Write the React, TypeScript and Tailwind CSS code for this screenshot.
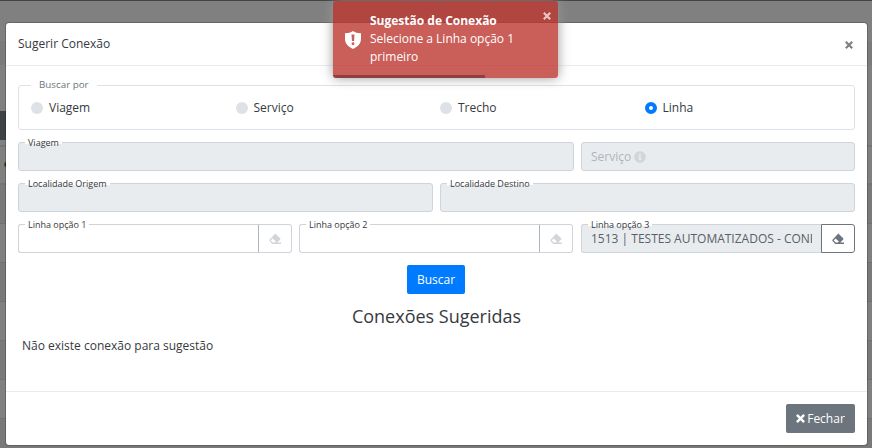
import { useState } from 'react';
import type { ReactNode } from 'react';
import { FaInfoCircle } from 'react-icons/fa';

const OPTIONS = ['Viagem', 'Serviço', 'Trecho', 'Linha'];

// Rows of the listing behind the backdrop
const PAGE_ROWS = [
  { id: 'topbar', style: 'h-px bg-[#444444]' },
  { id: 'title', style: 'h-10 bg-[#808080]' },
  { id: 'filter', style: 'h-6 bg-[#7a7b7c]' },
  { id: 'space', style: 'h-[46px] bg-[#808080]' },
  { id: 'thead', style: 'h-[29px] bg-[linear-gradient(to_right,#3e4247_50%,#808080_50%)]' },
  { id: 'pad', style: 'h-[5px] bg-[#808080]' },
  { id: 'r1', style: 'h-[38px] border-t-2 border-[#737475] bg-[#808080]' },
  { id: 'r2', style: 'h-10 border-t-2 border-[#737475] bg-[#797979]' },
  { id: 'r3', style: 'h-[39px] border-t border-[#6f7071] bg-[#808080]' },
  { id: 'r4', style: 'h-[39px] border-t border-[#6f7071] bg-[#797979]' },
  { id: 'r5', style: 'h-[39px] border-t border-[#6f7071] bg-[#808080]' },
  { id: 'r6', style: 'h-[39px] border-t border-[#6f7071] bg-[#797979]' },
  { id: 'r7', style: 'h-[39px] border-t border-[#6f7071] bg-[#808080]' },
  { id: 'r8', style: 'flex-1 border-t border-[#6f7071] bg-[#797979]' },
];

function CloseIcon({ className = '' }: { className?: string }) {
  return (
    <svg viewBox="0 0 8 8" className={className} fill="none" stroke="currentColor" strokeWidth="2.2">
      <path d="M.8.8l6.400 6.400M7.200.8L.8 7.200" />
    </svg>
  );
}

function EraserIcon() {
  return (
    <svg viewBox="0 0 12 11" className="h-[11px] w-3" fill="currentColor">
      <path
        fillRule="evenodd"
        d="M6.300.4 11.200 5.300Q11.700 5.900 11.200 6.500L8.300 9.600H12V11H3.300L.5 8Q0 7.300.5 6.700ZM3.500 5.500 1.700 7.400 3.800 9.600H5.900L6.900 8.500Z"
      />
    </svg>
  );
}

interface FieldProps {
  label: string;
  value?: string;
  disabled?: boolean;
  action?: ReactNode;
  className?: string;
}

function Field({ label, value = '', disabled, action, className = '' }: FieldProps) {
  return (
    <div className={`relative flex h-[29px] ${className}`}>
      <input
        aria-label={label}
        defaultValue={value}
        disabled={disabled}
        className={`h-full min-w-0 flex-1 border border-[#ced4da] px-[9px] text-[12px] text-[#5a6066] outline-none ${
          disabled ? 'bg-[#e9ecef]' : 'bg-white'
        } ${action ? 'rounded-l-[3px] border-r-0' : 'rounded-[3px]'}`}
      />
      {action}
      <span className="absolute top-[-5px] left-[7px] bg-[linear-gradient(transparent_5px,#fff_5px,#fff_7px,transparent_7px)] px-[3px] text-[9px] leading-[12px]">
        {label}
      </span>
    </div>
  );
}

function ClearButton({ active }: { active?: boolean }) {
  return (
    <button
      aria-label="Limpar"
      className={`flex h-full w-[34px] shrink-0 items-center justify-center rounded-r-[3px] border bg-white ${
        active ? 'border-[#6c757d] text-[#6c757d]' : 'border-[#ced4da] border-l-[#adb5bd] text-[#d3d6d8]'
      }`}
    >
      <EraserIcon />
    </button>
  );
}

function Toast() {
  return (
    <div className="absolute top-px left-[333px] h-[77px] w-[225px] overflow-hidden rounded-[3px] bg-[#bd362f]/80 text-white shadow-[0_0_12px_#999]">
      <div className="flex h-full items-center pl-3">
        <svg viewBox="0 0 18 20" className="h-[18px] w-[16px] shrink-0" fill="currentColor">
          <path
            fillRule="evenodd"
            d="M9 0c2.5 1.7 5.200 2.400 9 2.500v6.200C18 14 14.600 17.800 9 20 3.400 17.800 0 14 0 8.700V2.500C3.800 2.400 6.500 1.700 9 0ZM7.300 3.800l.5 7.400h2.400l.5-7.400ZM9 12.600a1.600 1.600 0 1 0 0 3.200 1.600 1.600 0 0 0 0-3.200Z"
          />
        </svg>
        <div className="mb-[2px] ml-[9px] w-[165px] leading-[18px]">
          <div className="font-bold">Sugestão de Conexão</div>
          <div>Selecione a Linha opção 1 primeiro</div>
        </div>
      </div>
      <button aria-label="Fechar aviso" className="absolute top-[11px] right-[7px] opacity-70">
        <CloseIcon className="size-2" />
      </button>
      <div className="absolute bottom-0 left-0 h-[3px] w-[152px] bg-black/30" />
    </div>
  );
}

export default function App() {
  const [option, setOption] = useState('Linha');

  return (
    <div className="relative h-[448px] w-[872px] overflow-hidden font-['Open_Sans',sans-serif] text-[12px] leading-[18px] text-[#363a3e]">
      <div className="flex h-full flex-col">
        {PAGE_ROWS.map((row) => (
          <div key={row.id} className={row.style} />
        ))}
      </div>
      <span className="absolute top-[161px] left-1 size-[7px] rounded-full border border-[#6b4d18] bg-[#33260f]" />

      {/* Modal */}
      <div className="absolute top-[22px] left-[5px] flex h-[424px] w-[863px] flex-col rounded-[4px] border border-black/20 bg-white bg-clip-padding">
        <div className="flex h-[43px] shrink-0 items-center justify-between border-b border-[#e9ecef] pr-[14px] pl-3">
          <h5>Sugerir Conexão</h5>
          <button aria-label="Fechar" className="mt-px text-[#7f7f7f]">
            <CloseIcon className="size-2" />
          </button>
        </div>

        <div className="flex-1 px-3 pt-[19px]">
          <div className="relative flex h-[45px] items-center rounded-[3px] border border-[#dee2e6] pl-3">
            <span className="absolute top-[-9px] left-3 bg-white px-2 text-[9.8px] leading-[16px] text-[#6c757d]">
              Buscar por
            </span>
            <div className="grid w-[818px] grid-cols-4">
              {OPTIONS.map((item) => (
                <label key={item} className="flex items-center gap-[6px]">
                  <input
                    type="radio"
                    name="busca"
                    className="sr-only"
                    checked={option === item}
                    onChange={() => setOption(item)}
                  />
                  <span
                    className={`size-3 rounded-full ${
                      option === item ? 'border-4 border-[#007bff] bg-white' : 'bg-[#dee2e6]'
                    }`}
                  />
                  {item}
                </label>
              ))}
            </div>
          </div>

          <div className="mt-3 flex gap-[7px]">
            <Field label="Viagem" disabled className="w-[556px]" />
            <div className="flex h-[29px] flex-1 items-center gap-[3px] rounded-[3px] border border-[#ced4da] bg-[#e9ecef] px-[9px] text-[#b1b5b9]">
              Serviço
              <FaInfoCircle className="text-[12px] text-[#d3d5d7]" />
            </div>
          </div>

          <div className="mt-3 grid grid-cols-2 gap-[7px]">
            <Field label="Localidade Origem" disabled />
            <Field label="Localidade Destino" disabled />
          </div>

          <div className="mt-3 flex">
            <Field label="Linha opção 1" action={<ClearButton />} className="mr-[7px] w-[274px]" />
            <Field label="Linha opção 2" action={<ClearButton />} className="mr-2 w-[274px]" />
            <Field
              label="Linha opção 3"
              value="1513 | TESTES AUTOMATIZADOS - CONEXÃO"
              disabled
              action={<ClearButton active />}
              className="w-[274px]"
            />
          </div>

          <div className="mt-3 flex justify-center pr-px">
            <button className="h-[29px] w-[58px] rounded-[2px] bg-[#007bff] text-white">Buscar</button>
          </div>
          <h4 className="mt-[10px] text-center text-[18px] leading-6">Conexões Sugeridas</h4>
          <p className="mt-[9px] pl-1">Não existe conexão para sugestão</p>
        </div>

        <div className="flex h-[54px] shrink-0 items-center justify-end border-t border-[#e9ecef] pr-3">
          <button className="flex h-[29px] w-[69px] items-center justify-center gap-[2px] rounded-[2px] bg-[#6c757d] text-white">
            <CloseIcon className="size-[9px]" />
            Fechar
          </button>
        </div>
      </div>

      <Toast />
    </div>
  );
}
